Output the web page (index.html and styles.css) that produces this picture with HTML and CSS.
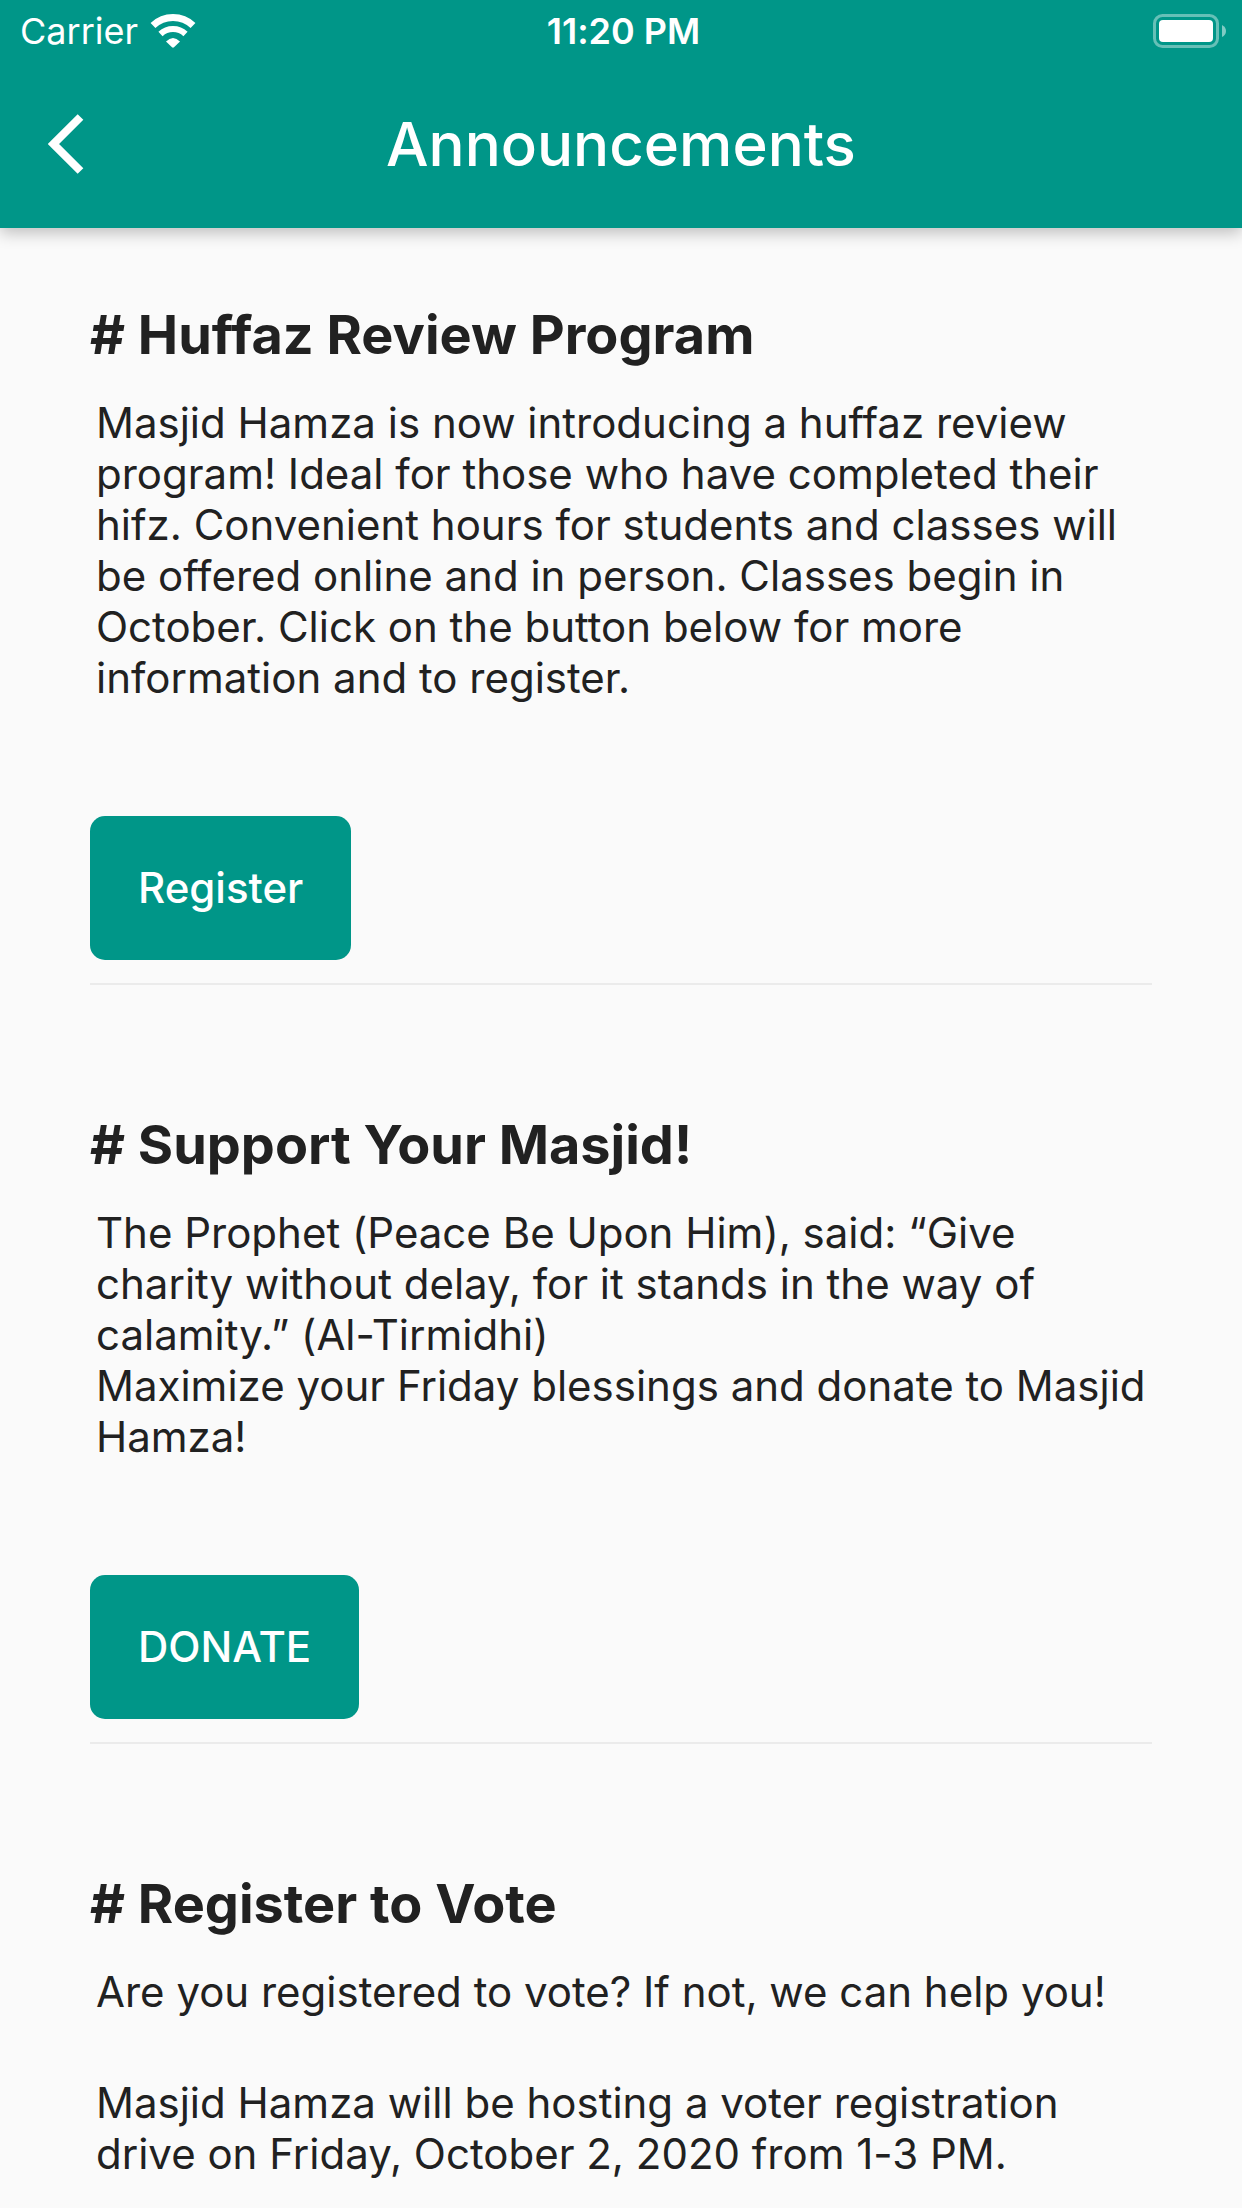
FILE: index.html
```html
<!DOCTYPE html>
<html lang="en">

<head>
    <meta charset="UTF-8">
    <meta name="viewport" content="width=device-width, initial-scale=1.0">
    <title>Announcements</title>
    <link rel="stylesheet" href="styles.css">
</head>

<body>
    <header class="app-bar">
        <div class="status-bar">
            <div class="carrier">
                <span>Carrier</span>
                <svg class="wifi" viewBox="0 0 46 34" aria-hidden="true">
                    <path d="M3 11.500A29 29 0 0 1 43 11.500" stroke-width="7" />
                    <path d="M10.500 20A18 18 0 0 1 35.500 20" stroke-width="6" />
                    <path d="M16 27.500Q23 20.500 30 27.500L24 33.300Q23 34 22 33.300Z" class="wifi-dot" />
                </svg>
            </div>
            <span class="time">11:20 PM</span>
            <svg class="battery" viewBox="0 0 74 34" aria-hidden="true">
                <rect class="battery-case" x="1.500" y="1.500" width="63" height="31" rx="8" />
                <rect class="battery-level" x="6" y="6" width="54" height="22" rx="4" />
                <path class="battery-tip" d="M69 11Q73 13 73 17T69 23Z" />
            </svg>
        </div>
        <div class="nav-bar">
            <button class="back" aria-label="Back">
                <svg viewBox="0 0 36 60" aria-hidden="true">
                    <path d="M32.500 3L5.500 30L32.500 57" />
                </svg>
            </button>
            <h1>Announcements</h1>
        </div>
    </header>

    <main>
        <section class="announcement">
            <h2># Huffaz Review Program</h2>
            <div class="message">
                <p>Masjid Hamza is now introducing a huffaz review program! Ideal for those who have completed their hifz. Convenient hours for students and classes will be offered online and in person. Classes begin in October. Click on the button below for more information and to register.</p>
            </div>
            <button class="action">Register</button>
        </section>

        <section class="announcement">
            <h2># Support Your Masjid!</h2>
            <div class="message">
                <p>The Prophet (Peace Be Upon Him), said: “Give charity without delay, for it stands in the way of calamity.” (Al-Tirmidhi)<br>Maximize your Friday blessings and donate to Masjid Hamza!</p>
            </div>
            <button class="action">DONATE</button>
        </section>

        <section class="announcement">
            <h2># Register to Vote</h2>
            <div class="message">
                <p>Are you registered to vote? If not, we can help you!</p>
                <p>Masjid Hamza will be hosting a voter registration drive on Friday, October 2, 2020 from 1-3 PM.</p>
            </div>
        </section>
    </main>
</body>

</html>
```

FILE: styles.css
```css
* {
    box-sizing: border-box;
}

body {
    margin: 0;
    font-family: Inter, "Liberation Sans", sans-serif;
    font-size: 42px;
    line-height: 51px;
    font-variant-ligatures: none;
    background-color: #fafafa;
    color: #212121;
}

h1,
h2,
p {
    margin: 0;
}

button {
    font-family: inherit;
    border: none;
    color: white;
    background-color: #009688;
    cursor: pointer;
}

.app-bar {
    background-color: #009688;
    color: white;
    box-shadow: 0 5px 15px rgba(0, 0, 0, 0.24);
}

.status-bar {
    display: grid;
    grid-template-columns: 1fr auto 1fr;
    align-items: center;
    height: 60px;
    padding: 2px 15px 0 20px;
    font-size: 36px;
}

.carrier {
    display: flex;
    align-items: center;
    gap: 12px;
}

.wifi {
    width: 46px;
    height: 34px;
    fill: none;
    stroke: white;
}

.wifi-dot {
    fill: white;
    stroke: none;
}

.time {
    font-weight: 600;
}

.battery {
    width: 74px;
    height: 34px;
    justify-self: end;
}

.battery-case {
    fill: none;
    stroke: rgba(255, 255, 255, 0.4);
    stroke-width: 3;
}

.battery-level {
    fill: white;
}

.battery-tip {
    fill: rgba(255, 255, 255, 0.5);
}

.nav-bar {
    display: grid;
    grid-template-columns: 1fr auto 1fr;
    align-items: center;
    height: 168px;
}

.nav-bar h1 {
    font-size: 60px;
    font-weight: 500;
    line-height: 72px;
}

.back {
    justify-self: start;
    display: flex;
    padding: 24px 48px;
}

.back svg {
    width: 36px;
    height: 60px;
    fill: none;
    stroke: white;
    stroke-width: 8;
}

main {
    padding: 0 90px;
}

.announcement {
    padding: 75px 0 23px;
}

.announcement + .announcement {
    padding-top: 128px;
    border-top: 2px solid #ebebeb;
}

.announcement h2 {
    font-size: 54px;
    font-weight: 700;
    line-height: 64px;
}

.message {
    display: flex;
    flex-direction: column;
    gap: 60px;
    padding: 30px 0 0 6px;
}

.action {
    display: block;
    height: 144px;
    margin-top: 113px;
    padding: 0 48px 2px;
    border-radius: 15px;
    font-size: 42px;
    font-weight: 500;
}
```
